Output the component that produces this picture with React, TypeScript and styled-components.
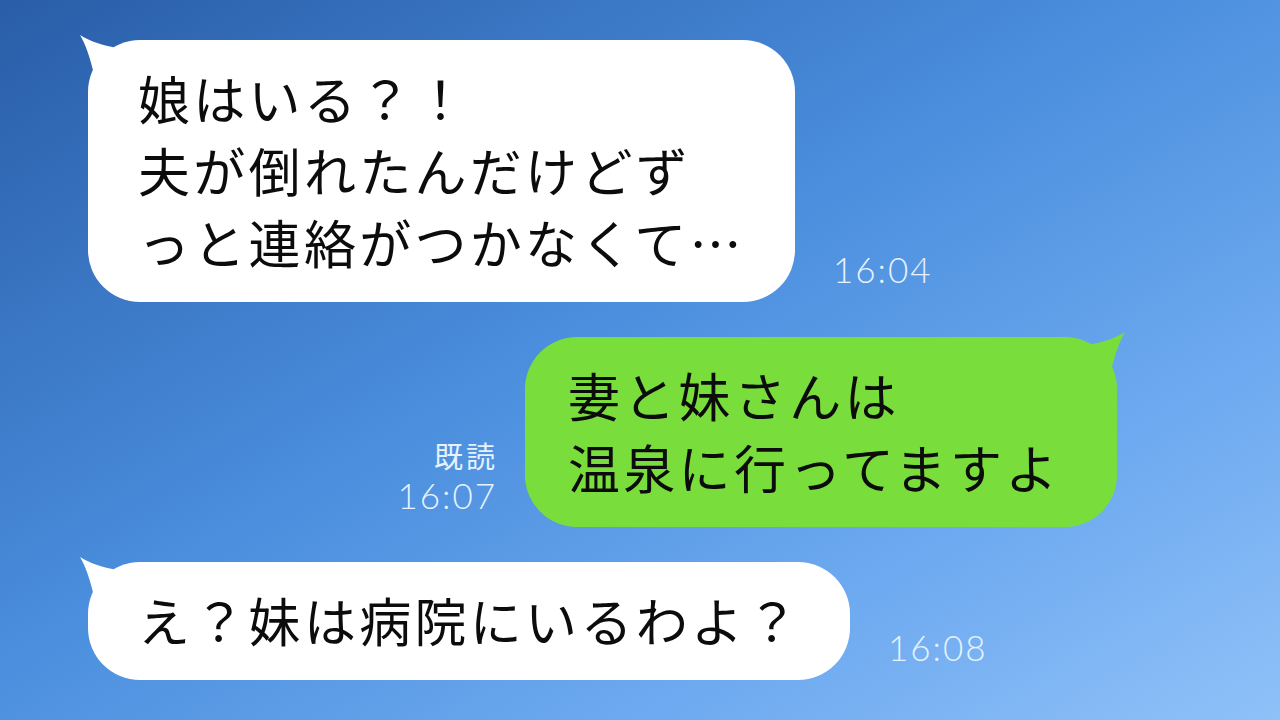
import React from 'react';
import styled, { createGlobalStyle } from 'styled-components';

const GlobalStyle = createGlobalStyle`
  html, body {
    margin: 0;
    padding: 0;
  }
  body {
    font-family: "Noto Sans CJK JP", "Noto Sans", sans-serif;
  }
`;

const Screen = styled.div`
  width: 1280px;
  height: 720px;
  box-sizing: border-box;
  padding-top: 40px;
  display: flex;
  flex-direction: column;
  gap: 35px;
  overflow: hidden;
  background: linear-gradient(150deg, #295da8 0%, #4a8edd 45%, #6eaaf0 75%, #8fc1f8 100%);
`;

const Row = styled.div<{ $side: 'left' | 'right' }>`
  display: flex;
  align-items: flex-end;
  justify-content: ${p => (p.$side === 'left' ? 'flex-start' : 'flex-end')};
  padding-left: ${p => (p.$side === 'left' ? '88px' : '0')};
  padding-right: ${p => (p.$side === 'right' ? '163px' : '0')};
`;

const Bubble = styled.div<{ $mine?: boolean; $width: number; $padLeft: number }>`
  position: relative;
  box-sizing: border-box;
  width: ${p => p.$width}px;
  padding: 22px 0 24px ${p => p.$padLeft}px;
  border-radius: 52px;
  background: ${p => (p.$mine ? '#79de3b' : '#ffffff')};
  color: #0c0c0c;
  font-size: 52px;
  line-height: 72px;
  letter-spacing: 3.3px;
  white-space: nowrap;
`;

const Tail = styled.svg<{ $mine?: boolean }>`
  position: absolute;
  top: -8px;
  width: 50px;
  height: 50px;
  ${p => (p.$mine ? 'right: -12px; transform: scaleX(-1);' : 'left: -12px;')}
`;

const Meta = styled.div<{ $side: 'left' | 'right' }>`
  display: flex;
  flex-direction: column;
  align-items: flex-end;
  color: #e6f2ff;
  margin: ${p => (p.$side === 'left' ? '0 0 16px 38px' : '0 30px 15px 0')};
`;

const Read = styled.span`
  font-size: 29px;
  line-height: 34px;
  letter-spacing: 3px;
  margin-right: -3px;
  margin-bottom: 6px;
`;

const Time = styled.span`
  font-family: "Lato", "Noto Sans", sans-serif;
  font-weight: 300;
  font-size: 35px;
  line-height: 34px;
  letter-spacing: 2px;
  margin-right: -2px;
`;

const BubbleTail: React.FC<{ mine?: boolean }> = ({ mine }) => (
  <Tail $mine={mine} viewBox="0 0 50 50">
    <path
      d="M4 3 C10 13 14 26 18 42 L40 16 C27 13 15 10 4 3 Z"
      fill={mine ? '#79de3b' : '#ffffff'}
    />
  </Tail>
);

type Message = {
  side: 'left' | 'right';
  lines: string[];
  time: string;
  read?: boolean;
  width: number;
  padLeft: number;
};

const messages: Message[] = [
  {
    side: 'left',
    lines: ['娘はいる？！', '夫が倒れたんだけどず', 'っと連絡がつかなくて…'],
    time: '16:04',
    width: 707,
    padLeft: 50,
  },
  {
    side: 'right',
    lines: ['妻と妹さんは', '温泉に行ってますよ'],
    time: '16:07',
    read: true,
    width: 592,
    padLeft: 43,
  },
  {
    side: 'left',
    lines: ['え？妹は病院にいるわよ？'],
    time: '16:08',
    width: 762,
    padLeft: 50,
  },
];

const App: React.FC = () => {
  return (
    <>
      <GlobalStyle />
      <Screen>
        {messages.map((m, i) => {
          const mine = m.side === 'right';
          const meta = (
            <Meta $side={m.side}>
              {m.read && <Read>既読</Read>}
              <Time>{m.time}</Time>
            </Meta>
          );
          return (
            <Row key={i} $side={m.side}>
              {mine && meta}
              <Bubble $mine={mine} $width={m.width} $padLeft={m.padLeft}>
                <BubbleTail mine={mine} />
                {m.lines.map((l, j) => (
                  <div key={j}>{l}</div>
                ))}
              </Bubble>
              {!mine && meta}
            </Row>
          );
        })}
      </Screen>
    </>
  );
};

export default App;
